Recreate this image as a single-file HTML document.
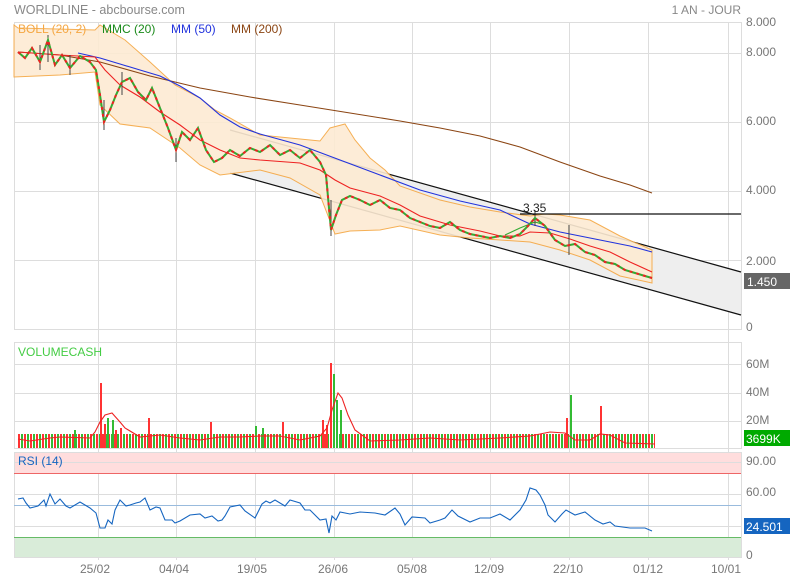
<!DOCTYPE html>
<html><head><meta charset="utf-8"><style>
html,body{margin:0;padding:0;background:#fff;}
svg{display:block;font-family:"Liberation Sans",sans-serif;}
</style></head><body>
<svg width="790" height="580" viewBox="0 0 790 580" xmlns="http://www.w3.org/2000/svg">
<defs>
<pattern id="vb" x="18" y="0" width="6" height="600" patternUnits="userSpaceOnUse">
<rect x="0" y="0" width="2" height="600" fill="#f33"/>
<rect x="3" y="4" width="2" height="600" fill="#3b3"/>
</pattern>
<clipPath id="top"><rect x="740" y="15" width="50" height="20"/></clipPath>
</defs>
<text x="14" y="14" font-size="12.5" fill="#888">WORLDLINE - abcbourse.com</text>
<text x="741" y="14" font-size="12" fill="#888" text-anchor="end">1 AN - JOUR</text>

<g stroke="#ddd" stroke-width="1" fill="none">
<rect x="14.5" y="22.5" width="727" height="307"/>
<line x1="14" y1="53.5" x2="741" y2="53.5"/><line x1="14" y1="122.5" x2="741" y2="122.5"/>
<line x1="14" y1="191.5" x2="741" y2="191.5"/><line x1="14" y1="260.5" x2="741" y2="260.5"/>
<line x1="98.5" y1="22" x2="98.5" y2="560"/><line x1="176.5" y1="22" x2="176.5" y2="560"/>
<line x1="255.5" y1="22" x2="255.5" y2="560"/><line x1="334.5" y1="22" x2="334.5" y2="560"/>
<line x1="412.5" y1="22" x2="412.5" y2="560"/><line x1="490.5" y1="22" x2="490.5" y2="560"/>
<line x1="569.5" y1="22" x2="569.5" y2="560"/><line x1="648.5" y1="22" x2="648.5" y2="560"/>
<line x1="728.5" y1="22" x2="728.5" y2="560"/>
</g>
<polygon points="230,130 741,272 741,315 230,173" fill="#eee"/>
<line x1="230" y1="130" x2="741" y2="272" stroke="#111" stroke-width="1.2"/>
<line x1="230" y1="173" x2="741" y2="315" stroke="#111" stroke-width="1.2"/>
<polygon points="14,25 18,28 95,30 100,25 125,40 150,62 175,85 200,98 215,110 230,118 260,135 320,141 330,128 345,124 355,140 370,158 385,170 400,186 440,200 470,207 500,212 530,216 545,214 560,215 590,220 620,236 652,250 652,283 620,276 590,260 560,250 530,242 500,240 470,238 440,235 400,226 380,230 350,231 335,234 320,195 290,178 260,170 220,175 200,165 180,148 150,128 120,124 100,105 95,72 60,75 14,77" fill="#fdebd3" stroke="#f5a742" stroke-width="1" opacity="0.9"/>
<polyline points="18,52 60,55 100,62 150,76 200,88 250,97 300,105 350,113 400,121 440,128 480,136 520,147 560,162 600,176 630,185 652,193" fill="none" stroke="#8b4513" stroke-width="1.1"/>
<polyline points="78,53 100,58 120,64 140,70 160,76 180,86 200,98 220,115 240,127 260,134 300,145 340,160 380,175 420,190 460,201 500,210 530,224 560,232 600,240 630,246 652,252" fill="none" stroke="#2233dd" stroke-width="1.1"/>
<polyline points="18,52 60,55 95,57 105,70 120,85 140,97 160,112 180,125 200,140 220,150 240,158 260,160 300,163 320,170 335,180 350,188 380,196 400,205 420,216 450,225 480,231 500,236 520,236 530,232 550,233 570,239 590,246 610,252 630,262 652,272" fill="none" stroke="#e22" stroke-width="1.1"/>
<polyline points="505,235 520,228 535,222 545,225" fill="none" stroke="#3a3" stroke-width="1.1"/>
<g stroke="#444" stroke-width="1">
<line x1="40" y1="45" x2="40" y2="70"/><line x1="48" y1="35" x2="48" y2="62"/><line x1="70" y1="55" x2="70" y2="75"/>
<line x1="104" y1="100" x2="104" y2="130"/><line x1="122" y1="72" x2="122" y2="95"/><line x1="176" y1="138" x2="176" y2="162"/>
<line x1="331" y1="200" x2="331" y2="236"/><line x1="535" y1="210" x2="535" y2="226"/><line x1="569" y1="225" x2="569" y2="255"/>
</g>
<polyline points="18,52 25,58 32,48 40,62 48,40 55,65 62,55 70,68 80,56 90,62 96,70 100,95 104,122 110,110 116,95 122,82 130,78 138,92 146,100 152,88 160,108 168,128 176,150 182,132 190,140 198,128 206,150 214,162 222,158 230,150 240,156 250,148 260,152 270,145 280,155 290,150 300,158 310,150 320,162 326,175 331,230 336,215 342,200 350,196 360,200 370,205 380,200 390,208 400,210 410,218 420,222 430,226 440,228 450,222 460,230 470,234 480,236 490,238 500,236 510,238 520,234 528,226 535,218 545,226 555,240 565,246 575,244 585,252 595,255 605,262 615,264 625,270 635,273 645,276 652,278" fill="none" stroke="#3a3" stroke-width="2"/>
<polyline points="18,52 25,58 32,48 40,62 48,40 55,65 62,55 70,68 80,56 90,62 96,70 100,95 104,122 110,110 116,95 122,82 130,78 138,92 146,100 152,88 160,108 168,128 176,150 182,132 190,140 198,128 206,150 214,162 222,158 230,150 240,156 250,148 260,152 270,145 280,155 290,150 300,158 310,150 320,162 326,175 331,230 336,215 342,200 350,196 360,200 370,205 380,200 390,208 400,210 410,218 420,222 430,226 440,228 450,222 460,230 470,234 480,236 490,238 500,236 510,238 520,234 528,226 535,218 545,226 555,240 565,246 575,244 585,252 595,255 605,262 615,264 625,270 635,273 645,276 652,278" fill="none" stroke="#e22" stroke-width="2" stroke-dasharray="3 4"/>
<line x1="520" y1="214" x2="741" y2="214" stroke="#111" stroke-width="1.2"/>
<text x="523" y="212" font-size="12" fill="#222">3.35</text>
<text x="18" y="33" font-size="12" fill="#f5a742">BOLL (20, 2)</text>
<text x="102" y="33" font-size="12" fill="#1a8a1a">MMC (20)</text>
<text x="171" y="33" font-size="12" fill="#2233dd">MM (50)</text>
<text x="231" y="33" font-size="12" fill="#8b4513">MM (200)</text>
<g font-size="12" fill="#777">
<text x="746" y="26" clip-path="url(#top)">8.000</text>
<text x="746" y="56">8.000</text><text x="746" y="125">6.000</text>
<text x="746" y="194">4.000</text><text x="746" y="265">2.000</text>
<text x="746" y="331">0</text>
</g>
<rect x="744" y="273" width="46" height="16" fill="#666"/>
<text x="747" y="286" font-size="12" fill="#fff">1.450</text>

<g stroke="#ddd" fill="none">
<rect x="14.5" y="342.5" width="727" height="106"/>
<line x1="14" y1="364.5" x2="741" y2="364.5"/><line x1="14" y1="393.5" x2="741" y2="393.5"/><line x1="14" y1="421.5" x2="741" y2="421.5"/>
</g>
<rect x="18" y="434" width="637" height="14" fill="url(#vb)"/>
<g fill="#f33">
<rect x="100" y="383" width="2" height="65"/><rect x="330" y="363" width="2" height="85"/>
<rect x="148" y="418" width="2" height="30"/><rect x="210" y="422" width="2" height="26"/>
<rect x="322" y="420" width="2" height="28"/><rect x="326" y="425" width="2" height="23"/>
<rect x="600" y="406" width="2" height="42"/><rect x="566" y="418" width="2" height="30"/>
<rect x="282" y="422" width="2" height="26"/><rect x="115" y="430" width="2" height="18"/>
<rect x="104" y="424" width="2" height="24"/><rect x="120" y="428" width="2" height="20"/>
</g>
<g fill="#3b3">
<rect x="333" y="374" width="2" height="74"/><rect x="336" y="400" width="2" height="48"/>
<rect x="340" y="410" width="2" height="38"/><rect x="570" y="395" width="2" height="53"/>
<rect x="107" y="418" width="2" height="30"/><rect x="112" y="420" width="2" height="28"/>
<rect x="255" y="426" width="2" height="22"/><rect x="262" y="428" width="2" height="20"/>
<rect x="74" y="430" width="2" height="18"/>
</g>
<polyline points="18,439 30,441 50,438 60,437 90,438 95,432 100,422 105,415 112,413 120,422 125,428 140,437 160,435 180,438 200,440 220,437 240,437 260,436 280,436 300,440 320,436 327,428 332,410 338,393 342,398 348,415 355,430 370,441 400,440 430,438 460,440 500,438 530,436 550,432 565,433 575,440 590,440 600,434 610,435 625,443 655,444" fill="none" stroke="#e22" stroke-width="1.1"/>
<text x="18" y="356" font-size="12" fill="#4c4">VOLUMECASH</text>
<g font-size="12" fill="#777">
<text x="746" y="368">60M</text><text x="746" y="396">40M</text><text x="746" y="424">20M</text>
</g>
<rect x="744" y="430" width="46" height="16" fill="#0a0"/>
<text x="746" y="443" font-size="12" fill="#fff">3699K</text>

<rect x="14" y="452" width="727" height="21" fill="#fdd"/>
<rect x="14" y="537" width="727" height="20" fill="#d9ecd9"/>
<g stroke="#ddd" fill="none">
<rect x="14.5" y="452.5" width="727" height="105"/>
<line x1="14" y1="494.5" x2="741" y2="494.5"/><line x1="14" y1="526.5" x2="741" y2="526.5"/>
<line x1="14" y1="462.5" x2="741" y2="462.5"/>
</g>
<line x1="14" y1="473.5" x2="741" y2="473.5" stroke="#e66" stroke-width="1"/>
<line x1="14" y1="505.5" x2="741" y2="505.5" stroke="#9bd" stroke-width="1"/>
<line x1="14" y1="537.5" x2="741" y2="537.5" stroke="#6b6" stroke-width="1"/>
<polyline points="18,499 23,498 26,503 30,508 38,506 44,500 46,506 50,494 55,504 60,499 66,506 70,508 80,502 90,508 96,513 100,528 105,528 108,520 112,524 115,510 120,500 126,506 130,505 136,503 140,502 145,498 150,510 156,507 160,508 165,520 172,520 175,523 180,521 190,515 200,514 205,518 212,516 218,521 222,520 225,516 230,507 240,505 245,511 255,518 262,504 266,501 270,503 275,500 285,506 290,500 300,503 305,510 310,510 320,520 326,519 329,533 332,516 336,520 340,512 350,514 360,512 375,513 385,515 395,508 400,514 405,525 412,517 425,518 430,523 440,520 445,518 452,510 458,516 470,522 480,518 490,518 500,514 510,520 520,510 526,500 530,488 536,490 540,495 545,505 548,515 555,522 562,514 566,510 575,515 585,512 595,520 603,524 610,522 615,526 630,528 645,528 652,531" fill="none" stroke="#1565c0" stroke-width="1.1"/>
<text x="18" y="465" font-size="12" fill="#1565c0">RSI (14)</text>
<g font-size="12" fill="#777">
<text x="746" y="465">90.00</text><text x="746" y="496">60.00</text><text x="746" y="559">0</text>
</g>
<rect x="744" y="518" width="46" height="16" fill="#1565c0"/>
<text x="746" y="531" font-size="12" fill="#fff">24.501</text>

<g font-size="12" fill="#777" text-anchor="middle">
<text x="95" y="573">25/02</text><text x="174" y="573">04/04</text><text x="252" y="573">19/05</text>
<text x="333" y="573">26/06</text><text x="412" y="573">05/08</text><text x="489" y="573">12/09</text>
<text x="568" y="573">22/10</text><text x="648" y="573">01/12</text><text x="726" y="573">10/01</text>
</g>
</svg>
</body></html>
